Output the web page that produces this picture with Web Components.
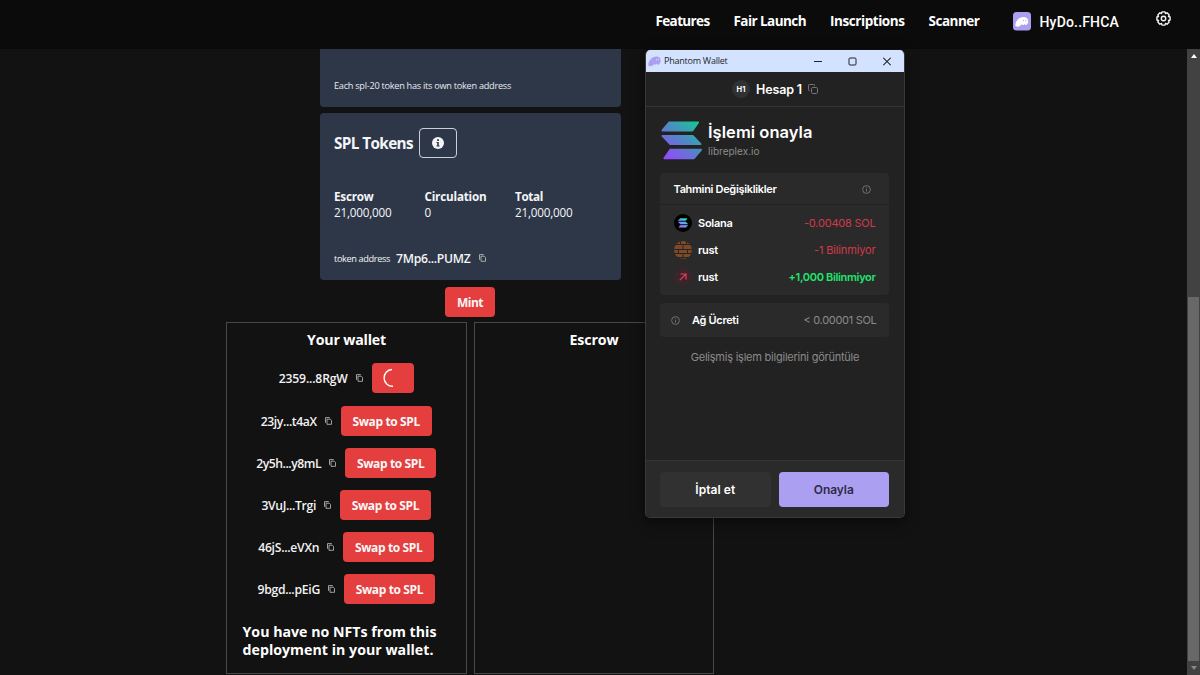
<!DOCTYPE html>
<html lang="tr">
<head>
  <meta charset="UTF-8">
  <title>Libreplex</title>
  <style>
    body {
      margin: 0;
      width: 1200px;
      height: 675px;
      overflow: hidden;
      background: #121212;
      color: #fff;
      font-family: "Open Sans", "Noto Sans", sans-serif;
    }
  </style>
</head>
<body>
  <mint-app></mint-app>

  <script>
    class SiteHeader extends HTMLElement {
      constructor() {
        super();
        this.attachShadow({ mode: 'open' });
      }

      connectedCallback() {
        this.shadowRoot.innerHTML = `
          <style>
            :host {
              display: flex;
              height: 49px;
              box-sizing: border-box;
              padding: 0 29px 6px 655.5px;
              justify-content: space-between;
              align-items: center;
              background: #0b0b0b;
              font-size: 13.500px;
              font-weight: 700;
            }
            nav {
              display: flex;
              gap: 24px;
              margin-bottom: 2px;
            }
            .account {
              display: flex;
              align-items: center;
              gap: 9px;
              margin-right: 4px;
              font-family: Roboto, sans-serif;
              font-size: 14px;
              font-weight: 500;
            }
            .gear {
              margin-bottom: 6px;
            }
            svg {
              display: block;
            }
          </style>
          <nav>
            <fit-text w="54">Features</fit-text>
            <fit-text w="72.5">Fair Launch</fit-text>
            <fit-text w="74.5">Inscriptions</fit-text>
            <fit-text w="51">Scanner</fit-text>
          </nav>
          <div class="account">
            <svg width="18" height="19" viewBox="0 0 18 19">
              <rect width="18" height="18.5" rx="3.5" fill="#ab9ff2"/>
              <path d="M2.300 13.200C2.600 9 6 5.100 10.200 5c3.200-.1 5.100 1.900 5 4.500-.1 2.300-1.600 3.900-2.800 3.500-.6-.2-.8-.7-.7-1.200-.5.8-1.300 1.400-2.100 1.200-.5-.1-.7-.5-.7-.9-.9 1.400-2.400 2.700-4.400 2.600-1.400-.1-2.200-.5-2.200-1.500z" fill="#fff"/>
              <ellipse cx="10.500" cy="8.600" rx=".5" ry=".8" fill="#ab9ff2"/>
              <ellipse cx="12.800" cy="8.600" rx=".5" ry=".8" fill="#ab9ff2"/>
            </svg>
            <fit-text w="79.5">HyDo..FHCA</fit-text>
          </div>
          <svg class="gear" width="15" height="15" viewBox="0 0 15 15" fill="none" stroke="#f2f2f2" stroke-width="1.400" stroke-linejoin="round">
            <path d="M6 .9h3l.5 1.600 1.600-.7 2.100 2.100-.7 1.600L14.100 6v3l-1.600.5.7 1.600-2.100 2.100-1.600-.7L9 14.100H6l-.5-1.600-1.600.7-2.100-2.100.7-1.600L.9 9V6l1.600-.5-.7-1.600 2.100-2.100 1.600.7z"/>
            <circle cx="7.500" cy="7.500" r="2.200"/>
          </svg>
        `;
      }
    }

    class CopyIcon extends HTMLElement {
      constructor() {
        super();
        this.attachShadow({ mode: 'open' });
      }

      connectedCallback() {
        this.shadowRoot.innerHTML = `
          <style>
            :host { display: block; width: 7px; height: 8px; }
            svg { display: block; }
          </style>
          <svg width="7" height="8" viewBox="0 0 7 8" fill="none" stroke="#c4c4c4" stroke-width=".8">
            <path d="M2 2.200h3.300L6.500 3.400v3.900H2z"/>
            <path d="M.5 5.800V.6h4.300"/>
          </svg>
        `;
      }
    }

    class RedButton extends HTMLElement {
      constructor() {
        super();
        this.attachShadow({ mode: 'open' });
      }

      connectedCallback() {
        this.shadowRoot.innerHTML = `
          <style>
            :host {
              display: flex;
              flex: none;
              align-items: center;
              justify-content: center;
              width: 91px;
              height: 30px;
              border-radius: 4px;
              background: #e53e3e;
              font-size: 12px;
              font-weight: 700;
              color: #f7f7f7;
            }
          </style>
          <slot></slot>
        `;
      }
    }

    class TokenCard extends HTMLElement {
      constructor() {
        super();
        this.attachShadow({ mode: 'open' });
      }

      connectedCallback() {
        this.shadowRoot.innerHTML = `
          <style>
            :host {
              display: block;
              box-sizing: border-box;
              width: 301px;
              height: 167px;
              padding: 15px 14px 0 14.500px;
              border-radius: 4px;
              background: #2d3748;
              color: #f4f5f7;
            }
            .title {
              display: flex;
              align-items: center;
              gap: 5.500px;
              height: 30px;
              font-size: 15.300px;
              font-weight: 700;
            }
            .info {
              display: grid;
              place-items: center;
              width: 36px;
              height: 28px;
              border: 1px solid #cbd0d8;
              border-radius: 4px;
            }
            .stats {
              display: grid;
              grid-template-columns: 90.5px 90.5px 1fr;
              margin-top: 30px;
              font-size: 11.700px;
              line-height: 16px;
            }
            b { font-weight: 700; display: block; }
            .address {
              display: flex;
              align-items: center;
              margin-top: 30px;
              height: 16px;
              line-height: 16px;
              font-size: 9.200px;
              padding-top: 1px;
            }
            .address b {
              margin: 0 8px 0 6px;
              font-size: 12.200px;
              font-weight: 600;
            }
            copy-icon { margin-bottom: 2px; }
          </style>
          <div class="title">
            <fit-text w="79">SPL Tokens</fit-text>
            <span class="info">
              <svg width="12" height="12" viewBox="0 0 12 12">
                <circle cx="6" cy="6" r="6" fill="#f4f5f7"/>
                <path d="M5.100 2.300h1.800V4H5.100zM4.500 4.900h2.300v3.500h.8v1.100H4.400V8.400h.8V6h-.7z" fill="#2d3748"/>
              </svg>
            </span>
          </div>
          <div class="stats">
            <div><b><fit-text w="39.500">Escrow</fit-text></b><fit-text w="57.500">21,000,000</fit-text></div>
            <div><b><fit-text w="62">Circulation</fit-text></b><fit-text w="7">0</fit-text></div>
            <div><b><fit-text w="28">Total</fit-text></b><fit-text w="57.500">21,000,000</fit-text></div>
          </div>
          <div class="address">
            <fit-text w="56">token address</fit-text>
            <b><fit-text w="74.500">7Mp6...PUMZ</fit-text></b>
            <copy-icon></copy-icon>
          </div>
        `;
      }
    }

    class WalletPanel extends HTMLElement {
      constructor() {
        super();
        this.attachShadow({ mode: 'open' });
      }

      connectedCallback() {
        this.shadowRoot.innerHTML = `
          <style>
            :host {
              display: block;
              box-sizing: border-box;
              width: 241px;
              height: 352px;
              border: 1px solid #484848;
              padding-top: 5px;
            }
            h2 {
              display: flex;
              justify-content: center;
              margin: 0;
              height: 23px;
              line-height: 23px;
              font-size: 14.200px;
              font-weight: 700;
            }
          </style>
          <h2><fit-text w="${this.getAttribute('title-width')}">${this.getAttribute('heading')}</fit-text></h2>
          <slot></slot>
        `;
      }
    }

    class NftRow extends HTMLElement {
      constructor() {
        super();
        this.attachShadow({ mode: 'open' });
      }

      connectedCallback() {
        const button = this.hasAttribute('loading')
          ? `<red-button style="width: 42px">
               <svg width="20" height="20" viewBox="0 0 20 20" fill="none" stroke="#fff" stroke-width="1.400">
                 <path d="M9 1.500a8.400 8.400 0 0 0 1 16.800"/>
               </svg>
             </red-button>`
          : `<red-button><fit-text w="67.500">Swap to SPL</fit-text></red-button>`;
        this.shadowRoot.innerHTML = `
          <style>
            :host {
              display: flex;
              align-items: center;
              justify-content: center;
              height: 30px;
              margin-bottom: 12.200px;
              padding-right: .6px;
              font-size: 12.200px;
              font-weight: 600;
              color: #f2f2f2;
            }
            copy-icon { margin: 0 9px 0 8px; }
            fit-text { margin-top: 1px; }
          </style>
          <fit-text w="${this.getAttribute('w')}">${this.getAttribute('address')}</fit-text>
          <copy-icon></copy-icon>
          ${button}
        `;
      }
    }

    class PageScrollbar extends HTMLElement {
      constructor() {
        super();
        this.attachShadow({ mode: 'open' });
      }

      connectedCallback() {
        this.shadowRoot.innerHTML = `
          <style>
            :host {
              display: flex;
              flex-direction: column;
              align-items: center;
              width: 13px;
              background: #424242;
            }
            .arrow { height: 14px; display: grid; place-items: center; }
            .track { flex: 1; }
            .thumb { width: 11px; height: 364px; background: #686868; }
          </style>
          <div class="arrow"><svg width="6" height="4"><path d="M0 4l3-4 3 4z" fill="#fff"/></svg></div>
          <div class="track"></div>
          <div class="thumb"></div>
          <div class="arrow"><svg width="6" height="4"><path d="M0 0l3 4 3-4z" fill="#888"/></svg></div>
        `;
      }
    }

    class SolanaLogo extends HTMLElement {
      constructor() {
        super();
        this.attachShadow({ mode: 'open' });
      }

      connectedCallback() {
        const size = this.getAttribute('size');
        const bright = this.hasAttribute('bright');
        this.shadowRoot.innerHTML = `
          <style>
            :host, svg { display: block; }
          </style>
          <svg width="${size}" height="${size}" viewBox="0 0 42 40">
            <defs>
              <linearGradient id="g" gradientUnits="userSpaceOnUse" x1="5" y1="40" x2="37" y2="0">
                <stop offset="0" stop-color="${bright ? '#b45cff' : '#9945ff'}"/>
                <stop offset=".5" stop-color="${bright ? '#6f9df0' : '#5682c9'}"/>
                <stop offset="1" stop-color="${bright ? '#19f0b0' : '#14c994'}"/>
              </linearGradient>
            </defs>
            <g fill="url(#g)" stroke="url(#g)" stroke-width="2" stroke-linejoin="round">
              <path d="M8.500 1.500H38l-5.800 8.200H1.500z"/>
              <path d="M1.500 15.300h31l8 8.400H9.500z"/>
              <path d="M9.500 29.500H41l-7.500 8.800H3.500z"/>
            </g>
          </svg>
        `;
      }
    }

    class InfoIcon extends HTMLElement {
      constructor() {
        super();
        this.attachShadow({ mode: 'open' });
      }

      connectedCallback() {
        this.shadowRoot.innerHTML = `
          <style>
            :host, svg { display: block; }
          </style>
          <svg width="9" height="9" viewBox="0 0 9 9" fill="none" stroke="#777">
            <circle cx="4.500" cy="4.500" r="3.900" stroke-width=".9"/>
            <path d="M4.500 4v2.600M4.500 2.300v.9" stroke-width=".9"/>
          </svg>
        `;
      }
    }

    class ChangeRow extends HTMLElement {
      constructor() {
        super();
        this.attachShadow({ mode: 'open' });
      }

      connectedCallback() {
        this.shadowRoot.innerHTML = `
          <style>
            :host {
              display: flex;
              align-items: center;
              height: 27px;
              padding: 0 13.500px 0 14px;
              font-size: 11px;
            }
            .icon {
              display: grid;
              place-items: center;
              width: 18px;
              height: 18px;
              margin-right: 6px;
              border-radius: 50%;
              overflow: hidden;
            }
            .name { flex: 1; font-weight: 600; color: #fff; }
          </style>
          <span class="icon" style="background: ${this.getAttribute('icon-bg') || 'none'}"><slot name="icon"></slot></span>
          <span class="name"><slot name="name"></slot></span>
          <slot></slot>
        `;
      }
    }

    class PhantomWindow extends HTMLElement {
      constructor() {
        super();
        this.attachShadow({ mode: 'open' });
      }

      connectedCallback() {
        this.shadowRoot.innerHTML = `
          <style>
            :host {
              display: flex;
              flex-direction: column;
              box-sizing: border-box;
              width: 260px;
              height: 468px;
              border: 1px solid #393939;
              border-top: 0;
              border-radius: 5px;
              overflow: hidden;
              background: #222;
              font-family: Inter, sans-serif;
              box-shadow: 0 4px 14px rgba(0, 0, 0, .5);
            }
            .titlebar {
              display: flex;
              align-items: center;
              height: 22px;
              margin: 0 -1px;
              padding: 0 14px 0 3px;
              background: #d3e2ff;
              color: #22252d;
              font-family: "Open Sans", sans-serif;
              font-size: 9px;
            }
            .titlebar fit-text { margin: 0 0 1px 3px; }
            .controls {
              display: flex;
              align-items: center;
              gap: 26px;
              margin-left: auto;
            }
            .account {
              display: flex;
              align-items: center;
              height: 34px;
              padding-left: 86px;
              border-bottom: 1px solid #333;
              font-size: 12.500px;
              font-weight: 600;
            }
            .avatar {
              display: grid;
              place-items: center;
              width: 18px;
              height: 18px;
              margin-right: 6px;
              border-radius: 50%;
              background: #303134;
              font-size: 7.500px;
              font-weight: 700;
            }
            .account svg { margin-left: 6px; }
            .site {
              display: flex;
              align-items: center;
              gap: 6px;
              height: 66px;
              padding-left: 15px;
            }
            .site .name { font-size: 16.500px; font-weight: 600; line-height: 22px; display: block; }
            .site .url { font-size: 10px; line-height: 17px; color: #8d8d8d; display: block; }
            .card {
              margin: 0 15px 8px 14px;
              border-radius: 4px;
              background: #2a2a2a;
            }
            .changes { height: 122px; }
            .head {
              display: flex;
              align-items: center;
              justify-content: space-between;
              height: 32px;
              margin-bottom: 4px;
              padding: 0 18px 0 13.500px;
              border-bottom: 1px solid #222;
              box-sizing: border-box;
              font-size: 11px;
              font-weight: 600;
            }
            .head info-icon { margin-top: 2px; }
            .red { color: #d13a4b; }
            .green { color: #21e56f; font-weight: 600; }
            .fee {
              display: flex;
              align-items: center;
              height: 34px;
              padding: 0 12.500px 0 11px;
              font-size: 11px;
            }
            .fee .label { flex: 1; margin-left: 12px; font-weight: 600; }
            .muted { color: #8b8b8b; }
            .more {
              display: flex;
              justify-content: center;
              margin-top: 5px;
              font-size: 11px;
              color: #8b8b8b;
            }
            .actions {
              display: flex;
              gap: 8px;
              height: 57px;
              box-sizing: border-box;
              margin-top: auto;
              padding: 11px 15px 10px 14px;
              border-top: 1px solid #343434;
              background: #2a2a2a;
            }
            .actions span {
              display: grid;
              place-items: center;
              flex: 1;
              height: 35px;
              border-radius: 4px;
              background: #313131;
              font-size: 12px;
              font-weight: 600;
            }
            .actions .primary { background: #ab9ff2; color: #2f2a48; }
            svg { display: block; }
          </style>
          <div class="titlebar">
            <svg width="13" height="11" viewBox="0 0 13 11">
              <path d="M.3 8.200C.9 4.200 4 .6 8.100.5c3-.1 4.800 1.700 4.600 4.300-.2 2.400-1.700 4.200-3 3.900-.5-.1-.8-.6-.7-1.100-.5.700-1.200 1.300-1.900 1.100-.5-.1-.8-.5-.7-.9C5.500 9.400 4 10.400 2.300 10.300.9 10.200.2 9.300.3 8.200z" fill="#ab9ff2"/>
              <path d="M8.500 3v1.200M10.500 3v1.200" stroke="#e4e5ff" stroke-width=".8"/>
            </svg>
            <fit-text w="63.500">Phantom Wallet</fit-text>
            <div class="controls">
              <svg width="8" height="9"><path d="M0 4.500h8" stroke="#20242c" stroke-width="1"/></svg>
              <svg width="9" height="9"><rect x="1" y="1" width="7" height="7" rx="1" fill="none" stroke="#20242c"/></svg>
              <svg width="8" height="9"><path d="M.3 .8l7.400 7.400M7.700.8L.3 8.200" stroke="#20242c" stroke-width="1.200"/></svg>
            </div>
          </div>
          <div class="account">
            <span class="avatar">H1</span>
            <fit-text w="46">Hesap 1</fit-text>
            <svg width="10" height="10" viewBox="0 0 10 10" fill="none" stroke="#767676" stroke-width="1">
              <rect x="3.500" y="3.500" width="6" height="6" rx="1.200"/>
              <path d="M2 6.500H1.300a.8.8 0 0 1-.8-.8V1.300a.8.8 0 0 1 .8-.8h4.400a.8.8 0 0 1 .8.8V2"/>
            </svg>
          </div>
          <div class="site">
            <solana-logo size="41"></solana-logo>
            <div>
              <fit-text class="name" w="104.500">İşlemi onayla</fit-text>
              <fit-text class="url" w="51.500">libreplex.io</fit-text>
            </div>
          </div>
          <div class="card changes">
            <div class="head"><fit-text w="103">Tahmini Değişiklikler</fit-text><info-icon></info-icon></div>
            <change-row icon-bg="#000">
              <solana-logo slot="icon" size="10" bright></solana-logo>
              <fit-text slot="name" w="34.500">Solana</fit-text>
              <fit-text class="red" w="71.500">-0.00408 SOL</fit-text>
            </change-row>
            <change-row icon-bg="#2d221d">
              <svg slot="icon" width="18" height="18" viewBox="0 0 18 18" fill="#7b4a2a">
                <path d="M1 0h5v3H1zM7 0h5v3H7zM13 0h5v3h-5zM0 4h8.500v4H0zM9.500 4H18v4H9.500zM0 9h4v3H0zM5 9h8v3H5zM14 9h4v3h-4zM0 13h8.500v3H0zM9.500 13H18v3H9.500zM4 17h4v1H4zM9 17h5v1H9z"/>
              </svg>
              <fit-text slot="name" w="20">rust</fit-text>
              <fit-text class="red" w="61.500">-1 Bilinmiyor</fit-text>
            </change-row>
            <change-row icon-bg="#3a262a">
              <svg slot="icon" width="8" height="8" fill="none" stroke="#ec3a55" stroke-width="1.200"><path d="M.8 7.200L7 1M1.500 1H7v5.500"/></svg>
              <fit-text slot="name" w="20">rust</fit-text>
              <fit-text class="green" w="87">+1,000 Bilinmiyor</fit-text>
            </change-row>
          </div>
          <div class="card fee">
            <info-icon></info-icon>
            <span class="label"><fit-text w="46.500">Ağ Ücreti</fit-text></span>
            <fit-text class="muted" w="73">&lt; 0.00001 SOL</fit-text>
          </div>
          <div class="more"><fit-text w="168.500">Gelişmiş işlem bilgilerini görüntüle</fit-text></div>
          <div class="actions">
            <span><fit-text w="40">İptal et</fit-text></span>
            <span class="primary"><fit-text w="40">Onayla</fit-text></span>
          </div>
        `;
      }
    }

    class MintApp extends HTMLElement {
      constructor() {
        super();
        this.attachShadow({ mode: 'open' });
      }

      connectedCallback() {
        this.shadowRoot.innerHTML = `
          <style>
            :host {
              display: block;
              position: relative;
              height: 675px;
            }
            .page {
              display: flex;
              justify-content: space-between;
              height: 626px;
            }
            main {
              display: flex;
              flex-direction: column;
              align-items: center;
              width: 488px;
              margin-left: 226px;
            }
            .intro {
              box-sizing: border-box;
              width: 301px;
              height: 58px;
              margin-bottom: 6px;
              padding: 29px 14px 0 14.500px;
              border-radius: 0 0 4px 4px;
              background: #2d3748;
              font-size: 9.200px;
              line-height: 16px;
              color: #e8eaee;
            }
            .mint { width: 50px; margin: 6.500px 0 5.500px; }
            .mint fit-text { margin-top: 1px; }
            .panels { display: flex; gap: 7px; }
            wallet-panel:last-child { width: 240px; }
            nft-row:first-of-type { margin-top: 12.400px; }
            .empty {
              margin: 18.600px 0 0 15.500px;
              font-size: 14.200px;
              font-weight: 700;
              line-height: 18px;
            }
            phantom-window {
              position: absolute;
              left: 645px;
              top: 50px;
            }
          </style>
          <site-header></site-header>
          <div class="page">
            <main>
              <div class="intro"><fit-text w="177">Each spl-20 token has its own token address</fit-text></div>
              <token-card></token-card>
              <red-button class="mint"><fit-text w="26">Mint</fit-text></red-button>
              <div class="panels">
                <wallet-panel heading="Your wallet" title-width="79">
                  <nft-row address="2359...8RgW" w="69" loading></nft-row>
                  <nft-row address="23jy...t4aX" w="56"></nft-row>
                  <nft-row address="2y5h...y8mL" w="65"></nft-row>
                  <nft-row address="3VuJ...Trgi" w="54.500"></nft-row>
                  <nft-row address="46jS...eVXn" w="61"></nft-row>
                  <nft-row address="9bgd...pEiG" w="62.500"></nft-row>
                  <div class="empty">
                    <fit-text w="194">You have no NFTs from this</fit-text><br>
                    <fit-text w="191">deployment in your wallet.</fit-text>
                  </div>
                </wallet-panel>
                <wallet-panel heading="Escrow" title-width="49"></wallet-panel>
              </div>
            </main>
            <page-scrollbar></page-scrollbar>
          </div>
          <phantom-window></phantom-window>
        `;
      }
    }

    // Text label tracked so that it takes exactly "w" pixels
    class FitText extends HTMLElement {
      constructor() {
        super();
        this.attachShadow({ mode: 'open' });
      }

      connectedCallback() {
        this.shadowRoot.innerHTML = `
          <style>
            :host { display: inline-block; white-space: nowrap; }
            span { display: inline-block; }
          </style>
          <span><slot></slot></span>
        `;
        const span = this.shadowRoot.querySelector('span');
        const width = parseFloat(this.getAttribute('w'));
        const natural = span.getBoundingClientRect().width;
        span.style.letterSpacing = (width - natural) / this.textContent.length + 'px';
        this.style.width = width + 'px';
      }
    }

    customElements.define('site-header', SiteHeader);
    customElements.define('copy-icon', CopyIcon);
    customElements.define('red-button', RedButton);
    customElements.define('token-card', TokenCard);
    customElements.define('wallet-panel', WalletPanel);
    customElements.define('nft-row', NftRow);
    customElements.define('page-scrollbar', PageScrollbar);
    customElements.define('solana-logo', SolanaLogo);
    customElements.define('info-icon', InfoIcon);
    customElements.define('change-row', ChangeRow);
    customElements.define('phantom-window', PhantomWindow);
    customElements.define('mint-app', MintApp);
    customElements.define('fit-text', FitText);
  </script>
</body>
</html>
